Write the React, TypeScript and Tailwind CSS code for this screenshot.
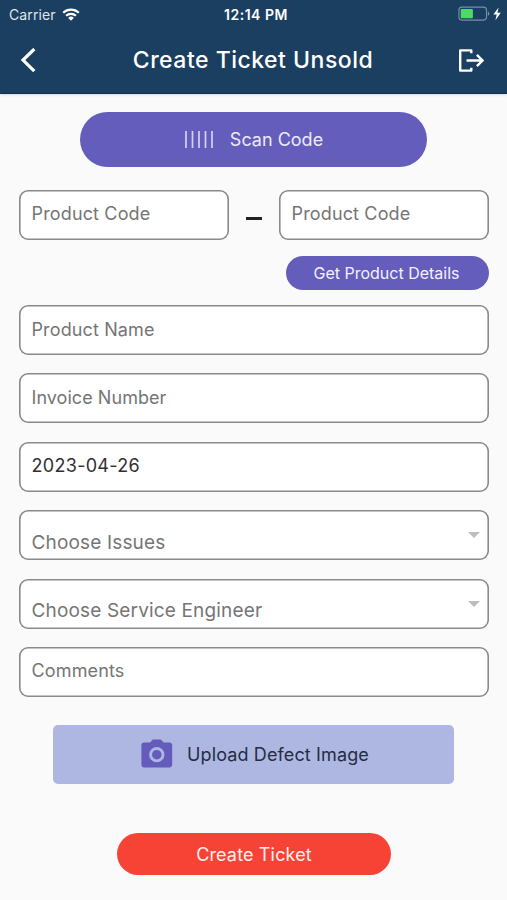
import type { ReactNode } from "react";

interface FieldProps {
  children: ReactNode;
  className?: string;
}

function Field({ children, className = "w-full pb-[2px]" }: FieldProps) {
  return (
    <div
      className={`flex h-[50px] items-center rounded-[9px] bg-white pl-[12.5px] text-[18px] text-[#757575] shadow-[inset_0_0_0_1.6px_#8a8a8a] ${className}`}
    >
      {children}
    </div>
  );
}

function SelectField({ label }: { label: string }) {
  return (
    <Field className="w-full justify-between pr-[9px]">
      <span className="pt-[16px] text-[19px] tracking-[0.16px]">{label}</span>
      <svg className="h-[6px] w-[12px]" viewBox="0 0 12 6" fill="#bdbdbd">
        <path d="M0 0h12L6 6z" />
      </svg>
    </Field>
  );
}

function WifiIcon() {
  return (
    <svg className="h-[13px] w-[18px]" viewBox="0 0 18 13" fill="none" stroke="white" strokeWidth="2.2">
      <path d="M1.2 4.7a11.2 11.2 0 0 1 15.6 0" />
      <path d="M4.1 7.8a7 7 0 0 1 9.8 0" />
      <path d="M6.2 9.9a4 4 0 0 1 5.6 0L9 12.7z" fill="white" stroke="none" />
    </svg>
  );
}

function BatteryIcon() {
  return (
    <svg className="h-[16px] w-[44px]" viewBox="0 0 44 16">
      <rect x="0.9" y="1.1" width="27.6" height="13" rx="3" fill="none" stroke="#7890a6" strokeWidth="1.1" />
      <rect x="2.7" y="2.9" width="12.2" height="9.4" rx="1" fill="#4cd964" />
      <path d="M29.8 5.5c2 .6 2 3.8 0 4.4z" fill="#7890a6" />
      <path d="M40.6 1.4 35.4 8.6h3.3l-1.3 5.6 5.4-7.4h-3.4z" fill="white" />
    </svg>
  );
}

function LogoutIcon() {
  return (
    <svg className="h-[24px] w-[26px]" viewBox="0 0 26 24" fill="none" stroke="white" strokeWidth="2.4">
      <path d="M13.3 4.200V1.400H2.200v20.200h11.100v-2.800" strokeLinejoin="round" />
      <path d="M8.500 11.500h15.800M18.900 5.900l5.600 5.600-5.600 5.600" />
    </svg>
  );
}

function CameraIcon() {
  return (
    <svg className="h-[29px] w-[32px]" viewBox="0 0 32 29">
      <path
        d="M3 3.600h6l1.400-1.700C11.100 1.100 11.800.6 12.700.6h6.200c.9 0 1.600.5 2.300 1.300l1.400 1.700h6c1.500 0 2.600 1.100 2.600 2.500v19.700c0 1.500-1.200 2.600-2.600 2.600H3c-1.500 0-2.600-1.200-2.600-2.600V6.100C.4 4.700 1.500 3.600 3 3.600z"
        fill="#645bbd"
      />
      <circle cx="15.800" cy="15.700" r="6.200" fill="none" stroke="#aeb7e1" strokeWidth="2.900" />
    </svg>
  );
}

function Header() {
  return (
    <header className="h-[94px] border-b border-[#15324d] bg-[#1b3f61] text-white shadow-sm">
      <div className="grid h-[28px] grid-cols-3 items-center text-[14px]">
        <div className="flex items-center gap-[6px] pl-[9px]">
          <span className="tracking-[0.1px] text-[#dfe6ec]">Carrier</span>
          <WifiIcon />
        </div>
        <span className="pl-[5px] text-center font-semibold tracking-[0.5px] whitespace-nowrap">12:14 PM</span>
        <div className="flex justify-end pr-[5px]">
          <BatteryIcon />
        </div>
      </div>
      <div className="flex h-[65px] items-center justify-between pr-[23px] pl-[20px]">
        <svg className="h-[26px] w-[26px]" viewBox="0 0 26 26" fill="none" stroke="white" strokeWidth="3.200">
          <path d="M14.300 1.000 3 12.100l11.300 11.100" />
        </svg>
        <h1 className="pl-[2px] text-[23px] font-medium tracking-[0.5px]">Create Ticket Unsold</h1>
        <LogoutIcon />
      </div>
    </header>
  );
}

export default function App() {
  return (
    <div className="h-[900px] w-[507px] overflow-hidden bg-[#fafafa] font-['Inter',sans-serif]">
      <Header />
      <main className="flex flex-col pt-[18px] pr-[18px] pl-[19px]">
        <button className="mr-[1px] flex h-[55px] w-[347px] items-center justify-center gap-[17px] self-center rounded-full bg-[#645dbc] pl-[1px] text-[18px] text-[#eceaf8]">
          <svg className="h-[17px] w-[28px]" viewBox="0 0 28 17" stroke="#d5d2ef" strokeWidth="1.700">
            <path d="M1 0v17M7.500 0v17M14 0v17M20.500 0v17M27 0v17" />
          </svg>
          <span>Scan Code</span>
        </button>

        <div className="mt-[23px] flex items-center justify-between">
          <Field className="w-[210px] pb-[3px]">
            <span className="tracking-[0.15px]">Product Code</span>
          </Field>
          <span className="mt-[6px] h-[3px] w-[16px] bg-[#212121]" />
          <Field className="w-[210px] pb-[3px]">
            <span className="tracking-[0.15px]">Product Code</span>
          </Field>
        </div>

        <button className="mt-[16px] h-[34px] w-[203px] self-end rounded-full bg-[#645dbc] pr-[2px] text-[16px] text-[#f3f2fb]">
          Get Product Details
        </button>

        <div className="mt-[15px] flex flex-col gap-[18.400px]">
          <Field>
            <span className="tracking-[0.12px]">Product Name</span>
          </Field>
          <Field>
            <span className="tracking-[0.05px]">Invoice Number</span>
          </Field>
          <Field>
            <span className="tracking-[0.3px] text-[#303030]">2023-04-26</span>
          </Field>
          <SelectField label="Choose Issues" />
          <SelectField label="Choose Service Engineer" />
          <Field>
            <span className="tracking-[0.15px]">Comments</span>
          </Field>
        </div>

        <button className="mt-[28px] mr-[1px] flex h-[59px] w-[401px] items-center justify-center gap-[14px] self-center rounded-[5px] bg-[#aeb7e1] pl-[3px] text-[18px] tracking-[0.12px] text-[#252c44]">
          <span className="-mt-[2px]">
            <CameraIcon />
          </span>
          <span>Upload Defect Image</span>
        </button>

        <button className="mt-[49px] h-[42.500px] w-[274px] self-center rounded-full bg-[#f74336] pt-[1px] text-[18px] tracking-[0.15px] text-[#fff0ee]">
          Create Ticket
        </button>
      </main>
    </div>
  );
}
